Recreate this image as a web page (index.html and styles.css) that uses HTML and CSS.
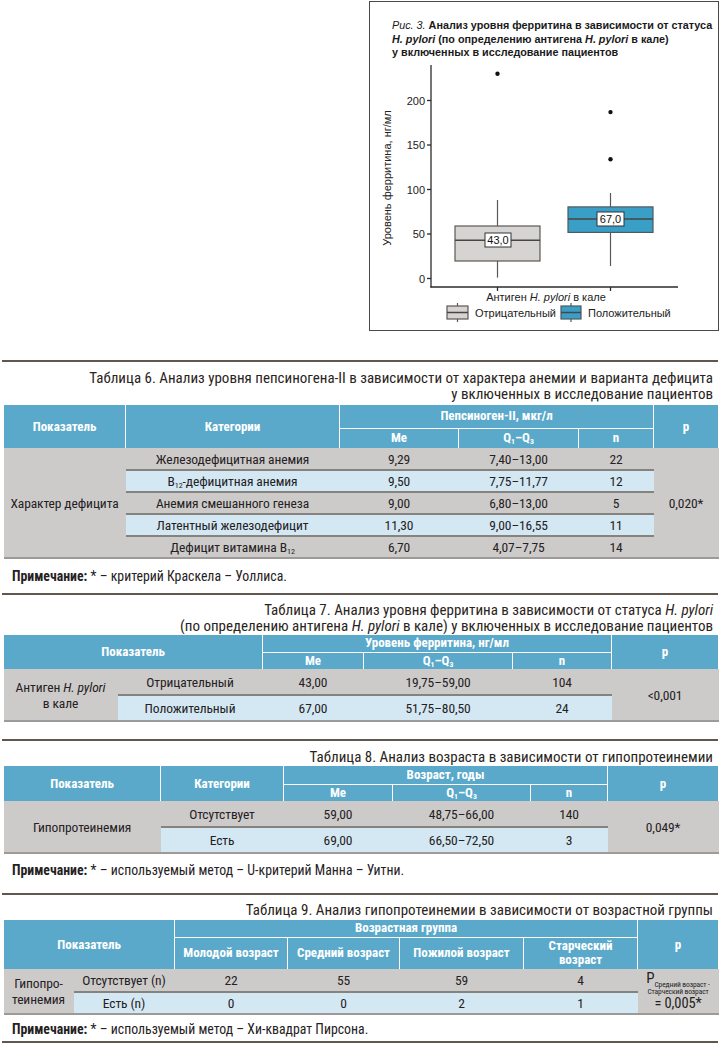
FILE: index.html
```html
<!DOCTYPE html>
<html lang="ru">
<head>
<meta charset="utf-8">
<title>Таблицы 6–9</title>
<link rel="stylesheet" href="styles.css">
</head>
<body>
<main class="page">
  <div class="fig-row">
    <figure class="fig">
      <figcaption class="fig-cap"><i class="fig-no">Рис. 3.</i> <b>Анализ уровня ферритина в зависимости от статуса<br><i>H. pylori</i> (по определению антигена <i>H. pylori</i> в кале)<br>у включенных в исследование пациентов</b></figcaption>
      <svg class="chart" width="348" height="270" viewBox="0 0 348 270">
        <g class="ax">
          <line x1="61" y1="5" x2="61" y2="227.6"/>
          <line x1="60.4" y1="227" x2="308" y2="227"/>
          <line x1="57" y1="218.5" x2="61" y2="218.5"/>
          <line x1="57" y1="174" x2="61" y2="174"/>
          <line x1="57" y1="129.5" x2="61" y2="129.5"/>
          <line x1="57" y1="85" x2="61" y2="85"/>
          <line x1="57" y1="40.5" x2="61" y2="40.5"/>
          <line x1="127.5" y1="227" x2="127.5" y2="231"/>
          <line x1="240.5" y1="227" x2="240.5" y2="231"/>
        </g>
        <g class="tick">
          <text x="55" y="222.5">0</text>
          <text x="55" y="178">50</text>
          <text x="55" y="133.5">100</text>
          <text x="55" y="89">150</text>
          <text x="55" y="44.5">200</text>
        </g>
        <text class="ylab" transform="translate(21 118) rotate(-90)">Уровень ферритина, нг/мл</text>

        <line class="wh" x1="127.5" y1="140" x2="127.5" y2="217.6"/>
        <rect class="bx-neg" x="85" y="166" width="85" height="35"/>
        <line class="med" x1="85" y1="180.2" x2="170" y2="180.2"/>
        <circle class="out" cx="127.5" cy="13.8" r="2.2"/>
        <rect class="lbl" x="115" y="173" width="26" height="14"/>
        <text class="lbt" x="128" y="184">43,0</text>

        <line class="wh" x1="240.5" y1="133" x2="240.5" y2="206"/>
        <rect class="bx-pos" x="198" y="146.9" width="85" height="25.5"/>
        <line class="med" x1="198" y1="158.9" x2="283" y2="158.9"/>
        <circle class="out" cx="240.5" cy="52.1" r="2.2"/>
        <circle class="out" cx="240.5" cy="99.2" r="2.2"/>
        <rect class="lbl" x="227" y="152" width="27" height="14"/>
        <text class="lbt" x="240.5" y="163">67,0</text>

        <text class="xlab" x="176" y="241">Антиген <tspan class="it">H. pylori</tspan> в кале</text>

        <line class="wh" x1="87.5" y1="243" x2="87.5" y2="262"/>
        <rect class="bx-neg" x="77" y="246" width="21" height="13"/>
        <line class="med" x1="77" y1="252.5" x2="98" y2="252.5"/>
        <text class="leg" x="105" y="257">Отрицательный</text>
        <line class="wh" x1="201" y1="243" x2="201" y2="262"/>
        <rect class="bx-pos" x="191" y="246" width="20" height="13"/>
        <line class="med" x1="191" y1="252.5" x2="211" y2="252.5"/>
        <text class="leg" x="218" y="257">Положительный</text>
      </svg>
    </figure>
  </div>

  <section class="blk b6">
    <div class="rule"></div>
    <h2 class="tcap">Таблица 6. Анализ уровня пепсиногена-II в зависимости от характера анемии и варианта дефицита<br>у включенных в исследование пациентов</h2>
    <table class="tbl t6">
      <colgroup><col><col><col><col><col><col></colgroup>
      <thead>
        <tr class="h1"><th rowspan="2">Показатель</th><th rowspan="2">Категории</th><th colspan="3" class="grp">Пепсиноген-II, мкг/л</th><th rowspan="2">p</th></tr>
        <tr class="h2"><th>Me</th><th>Q<sub>1</sub>–Q<sub>3</sub></th><th>n</th></tr>
      </thead>
      <tbody>
        <tr><td rowspan="5" class="lead">Характер дефицита</td><td>Железодефицитная анемия</td><td>9,29</td><td>7,40–13,00</td><td>22</td><td rowspan="5" class="pv">0,020*</td></tr>
        <tr class="alt"><td>B<sub>12</sub>-дефицитная анемия</td><td>9,50</td><td>7,75–11,77</td><td>12</td></tr>
        <tr><td>Анемия смешанного генеза</td><td>9,00</td><td>6,80–13,00</td><td>5</td></tr>
        <tr class="alt"><td>Латентный железодефицит</td><td>11,30</td><td>9,00–16,55</td><td>11</td></tr>
        <tr><td>Дефицит витамина B<sub>12</sub></td><td>6,70</td><td>4,07–7,75</td><td>14</td></tr>
      </tbody>
    </table>
    <p class="note"><b>Примечание:</b> * – критерий Краскела – Уоллиса.</p>
  </section>

  <section class="blk b7">
    <div class="rule"></div>
    <h2 class="tcap">Таблица 7. Анализ уровня ферритина в зависимости от статуса <i>H. pylori</i><br>(по определению антигена <i>H. pylori</i> в кале) у включенных в исследование пациентов</h2>
    <table class="tbl t7">
      <colgroup><col><col><col><col><col><col></colgroup>
      <thead>
        <tr class="h1"><th rowspan="2" colspan="2">Показатель</th><th colspan="3" class="grp">Уровень ферритина, нг/мл</th><th rowspan="2">p</th></tr>
        <tr class="h2"><th>Me</th><th>Q<sub>1</sub>–Q<sub>3</sub></th><th>n</th></tr>
      </thead>
      <tbody>
        <tr><td rowspan="2" class="lead">Антиген <i>H. pylori</i><br>в кале</td><td>Отрицательный</td><td>43,00</td><td>19,75–59,00</td><td>104</td><td rowspan="2" class="pv">&lt;0,001</td></tr>
        <tr class="alt"><td>Положительный</td><td>67,00</td><td>51,75–80,50</td><td>24</td></tr>
      </tbody>
    </table>
  </section>

  <section class="blk b8">
    <div class="rule"></div>
    <h2 class="tcap">Таблица 8. Анализ возраста в зависимости от гипопротеинемии</h2>
    <table class="tbl t8">
      <colgroup><col><col><col><col><col><col></colgroup>
      <thead>
        <tr class="h1"><th rowspan="2">Показатель</th><th rowspan="2">Категории</th><th colspan="3" class="grp">Возраст, годы</th><th rowspan="2">p</th></tr>
        <tr class="h2"><th>Me</th><th>Q<sub>1</sub>–Q<sub>3</sub></th><th>n</th></tr>
      </thead>
      <tbody>
        <tr><td rowspan="2" class="lead">Гипопротеинемия</td><td>Отсутствует</td><td>59,00</td><td>48,75–66,00</td><td>140</td><td rowspan="2" class="pv">0,049*</td></tr>
        <tr class="alt"><td>Есть</td><td>69,00</td><td>66,50–72,50</td><td>3</td></tr>
      </tbody>
    </table>
    <p class="note"><b>Примечание:</b> * – используемый метод – U-критерий Манна – Уитни.</p>
  </section>

  <section class="blk b9">
    <div class="rule"></div>
    <h2 class="tcap">Таблица 9. Анализ гипопротеинемии в зависимости от возрастной группы</h2>
    <table class="tbl t9">
      <colgroup><col><col><col><col><col><col><col></colgroup>
      <thead>
        <tr class="h1"><th rowspan="2" colspan="2">Показатель</th><th colspan="4" class="grp">Возрастная группа</th><th rowspan="2">p</th></tr>
        <tr class="h2"><th>Молодой возраст</th><th>Средний возраст</th><th>Пожилой возраст</th><th>Старческий<br>возраст</th></tr>
      </thead>
      <tbody>
        <tr><td rowspan="2" class="lead">Гипопро-<br>теинемия</td><td>Отсутствует (n)</td><td>22</td><td>55</td><td>59</td><td>4</td><td rowspan="2" class="pv pv9"><span class="pl">P<sub class="psub">Средний возраст -</sub></span><span class="psm">Старческий возраст</span><span class="peq">= 0,005*</span></td></tr>
        <tr class="alt"><td>Есть (n)</td><td>0</td><td>0</td><td>2</td><td>1</td></tr>
      </tbody>
    </table>
    <p class="note"><b>Примечание:</b> * – используемый метод – Хи-квадрат Пирсона.</p>
    <div class="rule rule-end"></div>
  </section>
</main>
</body>
</html>
```

FILE: styles.css
```css
* { box-sizing: border-box; }
html, body { margin: 0; padding: 0; background: #fff; }
body {
  width: 720px;
  color: #25211e;
  font-family: "Roboto Condensed", "Noto Sans", sans-serif;
  font-stretch: 80%;
}
.page { display: flex; flex-direction: column; }

/* figure */
.fig-row { display: flex; justify-content: flex-end; padding: 1px 1px 0 0; }
.fig {
  margin: 0;
  width: 350px;
  height: 330px;
  border: 1px solid #4a4a4a;
  display: flex;
  flex-direction: column;
}
.fig-cap {
  height: 58px;
  padding: 17px 0 0 22px;
  font-family: "Liberation Sans", Arial, sans-serif;
  font-stretch: normal;
  font-size: 10.8px;
  line-height: 13.5px;
  color: #1a1a1a;
  white-space: nowrap;
}
.fig-no { font-weight: normal; }
.chart { display: block; font-family: "Liberation Sans", Arial, sans-serif; font-stretch: normal; }
.chart .ax line { stroke: #2b2b2b; stroke-width: 1.3; }
.chart .tick text { font-size: 11px; fill: #222; text-anchor: end; }
.chart .ylab { font-size: 11px; fill: #222; text-anchor: middle; }
.chart .xlab { font-size: 11px; fill: #222; text-anchor: middle; }
.chart .it { font-style: italic; }
.chart .leg { font-size: 11px; fill: #222; }
.chart .wh { stroke: #5d5853; stroke-width: 1.2; }
.chart .bx-neg { fill: #d5d4d3; stroke: #5d5853; stroke-width: 1.2; }
.chart .bx-pos { fill: #3a9fc7; stroke: #4d5a60; stroke-width: 1.2; }
.chart .med { stroke: #4a4541; stroke-width: 1.5; }
.chart .out { fill: #111; }
.chart .lbl { fill: #fff; stroke: #333; stroke-width: 1; }
.chart .lbt { font-size: 11px; fill: #111; text-anchor: middle; }

/* table blocks */
.blk { display: flex; flex-direction: column; margin: 0 2px; }
.rule { height: 2px; background: #5e5850; }
.tcap {
  margin: 0;
  font-weight: normal;
  font-size: 15px;
  line-height: 16px;
  text-align: right;
  padding-right: 5px;
  color: #2a2420;
  white-space: nowrap;
}
.tbl {
  border-collapse: collapse;
  table-layout: fixed;
  width: 715px;
  margin-left: 1px;
}
.tbl th {
  background: #5aa9ca;
  color: #fff;
  font-weight: bold;
  font-size: 13px;
  line-height: 14px;
  padding: 0;
  text-align: center;
  vertical-align: middle;
  border-left: 1px solid #fff;
  border-right: 1px solid #fff;
}
.tbl th.grp { border-bottom: 1px solid #fff; }
.tbl td {
  background: #cdcbca;
  font-size: 13.5px;
  letter-spacing: -0.1px;
  line-height: 16px;
  padding: 0;
  text-align: center;
  vertical-align: middle;
}
.tbl tr.alt td { background: #d3e8f3; }
.tbl tbody tr + tr td { border-top: 2px solid #86837f; }
.tbl tbody tr:last-child td,
.tbl td.lead,
.tbl td.pv { border-bottom: 2px solid #9d9a97; }
sub { font-size: 0.6em; line-height: 0; vertical-align: -0.3em; }
.note { margin: 0; font-size: 13.8px; line-height: 16px; padding-left: 10px; }

/* table 6 */
.b6 { margin-top: 29px; }
.b6 .tcap { margin-top: 8px; }
.t6 { margin-top: 3px; }
.t6 col:nth-child(1) { width: 122px; }
.t6 col:nth-child(2) { width: 214px; }
.t6 col:nth-child(3) { width: 119px; }
.t6 col:nth-child(4) { width: 120px; }
.t6 col:nth-child(5) { width: 75px; }
.t6 col:nth-child(6) { width: 65px; }
.t6 .h1 th { height: 23px; }
.t6 .h2 th { height: 20px; }
.t6 td { height: 22px; }
.b6 .note { margin-top: 9px; }

/* table 7 */
.b7 { margin-top: 9px; }
.b7 .tcap { margin-top: 7px; }
.t7 { margin-top: 1px; }
.t7 col:nth-child(1) { width: 114px; }
.t7 col:nth-child(2) { width: 145px; }
.t7 col:nth-child(3) { width: 101px; }
.t7 col:nth-child(4) { width: 149px; }
.t7 col:nth-child(5) { width: 99px; }
.t7 col:nth-child(6) { width: 107px; }
.t7 .h1 th { height: 17px; }
.t7 .h2 th { height: 17px; }
.t7 td { height: 26px; }

/* table 8 */
.b8 { margin-top: 17px; }
.b8 .tcap { margin-top: 8px; }
.t8 { margin-top: 1px; }
.t8 col:nth-child(1) { width: 157px; }
.t8 col:nth-child(2) { width: 123px; }
.t8 col:nth-child(3) { width: 109px; }
.t8 col:nth-child(4) { width: 138px; }
.t8 col:nth-child(5) { width: 77px; }
.t8 col:nth-child(6) { width: 111px; }
.t8 .h1 th { height: 18px; }
.t8 .h2 th { height: 17px; }
.t8 td { height: 26px; }
.b8 .note { margin-top: 8px; }

/* table 9 */
.b9 { margin-top: 15px; }
.b9 .tcap { margin-top: 7px; }
.t9 { margin-top: 2px; }
.t9 col:nth-child(1) { width: 70px; }
.t9 col:nth-child(2) { width: 101px; }
.t9 col:nth-child(3) { width: 113px; }
.t9 col:nth-child(4) { width: 112px; }
.t9 col:nth-child(5) { width: 124px; }
.t9 col:nth-child(6) { width: 114px; }
.t9 col:nth-child(7) { width: 81px; }
.t9 .h1 th { height: 17px; }
.t9 .h2 th { height: 32px; }
.t9 tbody tr:first-child td { height: 23px; }
.t9 tbody tr.alt td { height: 22px; }
.b9 .note { margin-top: 6px; }
.rule-end { margin-top: 4px; }
.pv9 { line-height: 12px; letter-spacing: 0; }
.pv9 .pl { display: block; font-size: 15px; line-height: 13px; }
.pv9 .psub { font-size: 7.5px; vertical-align: -4px; }
.pv9 .psm { display: block; font-size: 7.5px; line-height: 9px; margin-top: 2px; }
.pv9 .peq { display: block; font-size: 14.5px; line-height: 15px; }
```
